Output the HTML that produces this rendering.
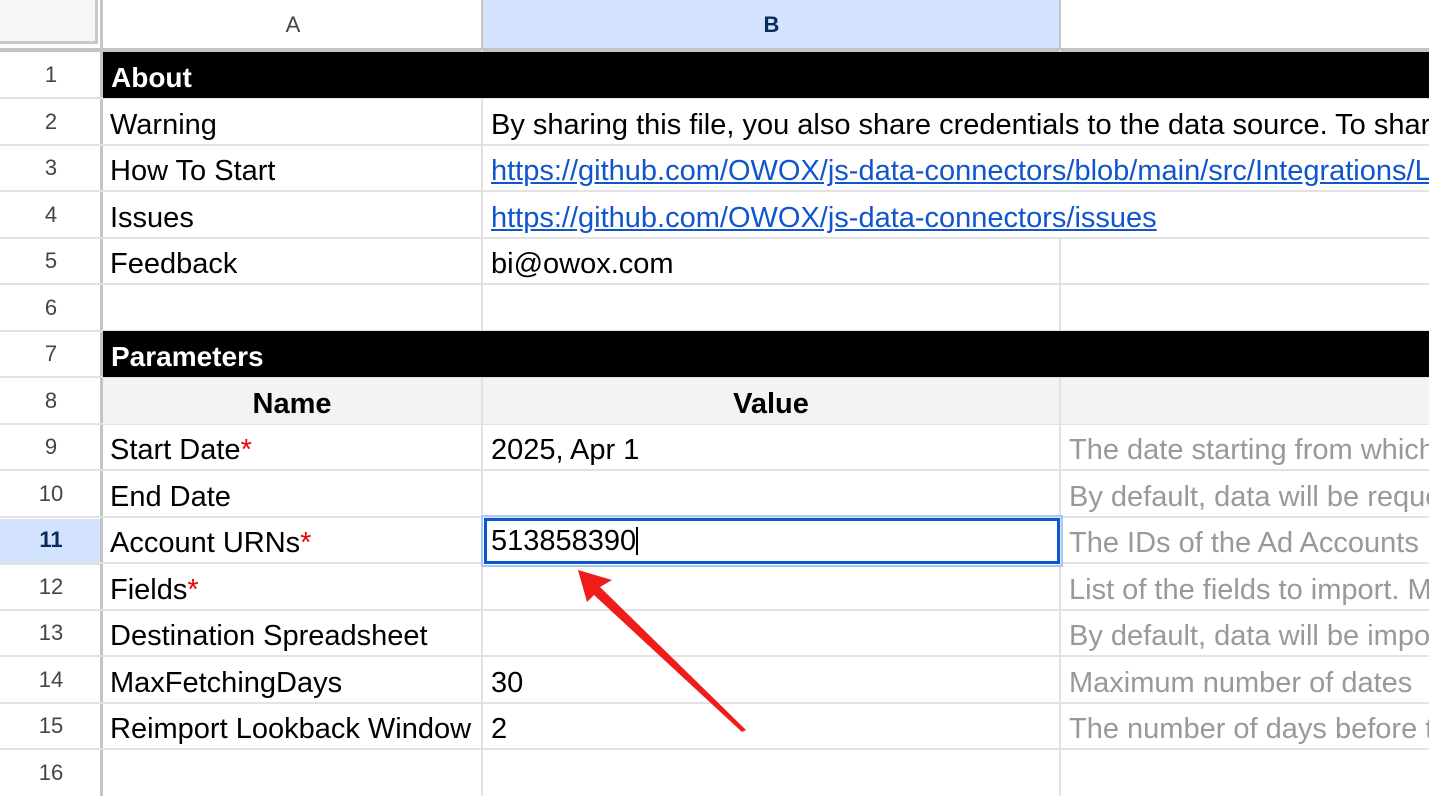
<!DOCTYPE html>
<html><head><meta charset="utf-8"><style>
*{margin:0;padding:0;box-sizing:border-box}
body{width:1429px;height:796px;overflow:hidden;background:#fff;font-family:"Liberation Sans",Arial,sans-serif;position:relative}
.a{position:absolute;white-space:nowrap;overflow:hidden}
.hl{position:absolute;left:0;width:1429px;height:2px;background:#e2e2e2}
.vl{position:absolute;top:50px;width:2px;height:746px;background:#e2e2e2}
.rn{position:absolute;left:0;width:102px;text-align:center;font-size:22px;color:#444;line-height:46px}
.c{position:absolute;font-size:29px;line-height:46px;color:#000;padding-left:8px;white-space:nowrap;overflow:hidden;padding-top:3px}
.bk{background:#000;color:#fff;font-weight:bold;font-size:28px}
a{color:#1155cc;text-decoration:underline}
.g{color:#999}
.r{color:#e00}
</style></head><body>
<div class="a" style="left:0;top:0;width:98px;height:44px;background:#f6f6f6;border-right:3px solid #c8c8c8;border-bottom:3px solid #c8c8c8"></div>
<div class="a" style="left:483px;top:0;width:577px;height:50px;background:#d3e3fd"></div>
<div class="a" style="left:103px;top:0;width:380px;height:50px;text-align:center;line-height:50px;font-size:22px;color:#444">A</div>
<div class="a" style="left:483px;top:0;width:577px;height:50px;text-align:center;line-height:50px;font-size:22px;color:#0b2a5e;font-weight:bold">B</div>
<div class="a" style="left:0;top:48px;width:1429px;height:4px;background:#c4c4c4"></div>
<div class="a" style="left:100px;top:0;width:3px;height:796px;background:#c4c4c4"></div>
<div class="a" style="left:481px;top:0;width:2px;height:50px;background:#c4c4c4"></div>
<div class="a" style="left:1059px;top:0;width:2px;height:50px;background:#c4c4c4"></div>
<div class="a" style="left:0;top:519px;width:100px;height:46px;background:#d3e3fd"></div>

<div class="vl" style="left:481px"></div>
<div class="vl" style="left:1059px"></div>
<div class="a" style="left:1058px;top:99px;width:5px;height:45px;background:#fff"></div>
<div class="a" style="left:1058px;top:146px;width:5px;height:44px;background:#fff"></div>
<div class="a" style="left:1058px;top:192px;width:5px;height:45px;background:#fff"></div>
<div class="hl" style="top:97px"></div><div class="hl" style="top:144px"></div><div class="hl" style="top:190px"></div><div class="hl" style="top:237px"></div><div class="hl" style="top:283px"></div><div class="hl" style="top:330px"></div><div class="hl" style="top:376px"></div><div class="hl" style="top:423px"></div><div class="hl" style="top:469px"></div><div class="hl" style="top:516px"></div><div class="hl" style="top:562px"></div><div class="hl" style="top:609px"></div><div class="hl" style="top:655px"></div><div class="hl" style="top:702px"></div><div class="hl" style="top:748px"></div>

<div class="rn" style="top:52px">1</div><div class="rn" style="top:99px">2</div><div class="rn" style="top:145px">3</div><div class="rn" style="top:192px">4</div><div class="rn" style="top:238px">5</div><div class="rn" style="top:285px">6</div><div class="rn" style="top:331px">7</div><div class="rn" style="top:378px">8</div><div class="rn" style="top:424px">9</div><div class="rn" style="top:471px">10</div><div class="rn" style="top:517px;font-weight:bold;color:#0b2a5e">11</div><div class="rn" style="top:564px">12</div><div class="rn" style="top:610px">13</div><div class="rn" style="top:657px">14</div><div class="rn" style="top:703px">15</div><div class="rn" style="top:750px">16</div>

<div class="c bk" style="left:103px;top:52px;width:1326px;height:46px">About</div>
<div class="c bk" style="left:103px;top:331px;width:1326px;height:46px">Parameters</div>
<div class="a" style="left:103px;top:378px;width:1326px;height:46px;background:#f3f3f3"></div>
<div class="a" style="left:481px;top:378px;width:2px;height:46px;background:#e2e2e2"></div>
<div class="a" style="left:1059px;top:378px;width:2px;height:46px;background:#e2e2e2"></div>
<div class="c" style="left:103px;top:378px;width:378px;text-align:center;font-weight:bold;padding-left:0">Name</div>
<div class="c" style="left:483px;top:378px;width:576px;text-align:center;font-weight:bold;padding-left:0">Value</div>

<div class="c" style="left:102px;top:99px">Warning</div>
<div class="c" style="left:483px;top:99px;width:946px">By sharing this file, you also share credentials to the data source. To share</div>
<div class="c" style="left:102px;top:145px">How To Start</div>
<div class="c" style="left:483px;top:145px;width:946px"><a>https://github.com/OWOX/js-data-connectors/blob/main/src/Integrations/Link</a></div>
<div class="c" style="left:102px;top:192px">Issues</div>
<div class="c" style="left:483px;top:192px"><a>https://github.com/OWOX/js-data-connectors/issues</a></div>
<div class="c" style="left:102px;top:238px">Feedback</div>
<div class="c" style="left:483px;top:238px">bi@owox.com</div>

<div class="c" style="left:102px;top:424px">Start Date<span class="r">*</span></div>
<div class="c" style="left:483px;top:424px">2025, Apr 1</div>
<div class="c g" style="left:1061px;top:424px;width:368px">The date starting from which</div>
<div class="c" style="left:102px;top:471px">End Date</div>
<div class="c g" style="left:1061px;top:471px;width:368px">By default, data will be reques</div>
<div class="c" style="left:102px;top:517px">Account URNs<span class="r">*</span></div>
<div class="c g" style="left:1061px;top:517px;width:368px">The IDs of the Ad Accounts</div>
<div class="c" style="left:102px;top:564px">Fields<span class="r">*</span></div>
<div class="c g" style="left:1061px;top:564px;width:368px">List of the fields to import. M</div>
<div class="c" style="left:102px;top:610px">Destination Spreadsheet</div>
<div class="c g" style="left:1061px;top:610px;width:368px">By default, data will be impo</div>
<div class="c" style="left:102px;top:657px">MaxFetchingDays</div>
<div class="c" style="left:483px;top:657px">30</div>
<div class="c g" style="left:1061px;top:657px;width:368px">Maximum number of dates</div>
<div class="c" style="left:102px;top:703px;width:379px">Reimport Lookback Window</div>
<div class="c" style="left:483px;top:703px">2</div>
<div class="c g" style="left:1061px;top:703px;width:368px">The number of days before t</div>

<div class="a" style="left:481px;top:515px;width:582px;height:52px;border:2px solid #a8c7fa"></div>
<div class="a" style="left:484px;top:518px;width:576px;height:46px;border:3px solid #0b57d0;background:#fff"></div>
<div class="c" style="left:483px;top:515px">513858390<span style="display:inline-block;width:1.5px;height:28px;background:#000;vertical-align:-5px"></span></div>

<svg class="a" style="left:0;top:0" width="1429" height="796">
<polygon points="578,570 612,580 600,587 746,730 742,732 594,595 587,602" fill="#f01c1c"/>
</svg>
</body></html>
